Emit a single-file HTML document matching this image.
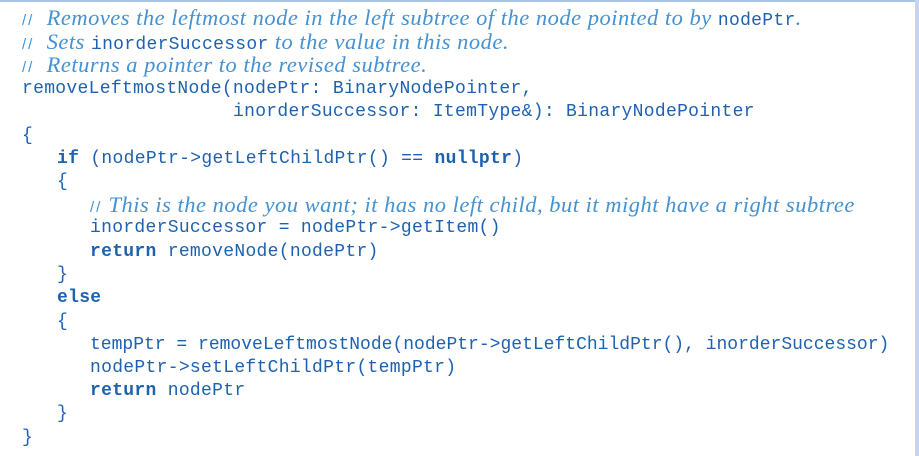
<!DOCTYPE html>
<html><head><style>
html,body{margin:0;padding:0;background:#fff;}
body{width:919px;height:456px;position:relative;overflow:hidden;}
.tb{position:absolute;left:0;top:0;width:919px;height:2px;background:#aac4e4;}
.rb{position:absolute;left:915px;top:0;width:4px;height:456px;background:#c5d6ee;}
.l{position:absolute;white-space:pre;font-family:"Liberation Mono",monospace;font-size:18px;letter-spacing:0.3px;color:#1d62b0;line-height:23px;}
.c{font-family:"Liberation Serif",serif;font-style:italic;font-size:22.5px;letter-spacing:0.5px;color:#4592d2;}
.s{font-family:"Liberation Sans",sans-serif;font-style:normal;font-size:15px;color:#4592d2;letter-spacing:2px;}
.cm{font-family:"Liberation Mono",monospace;font-style:normal;font-size:18px;letter-spacing:0.3px;color:#1d62b0;}
b{font-weight:bold;}
</style></head><body>
<div class="tb"></div><div class="rb"></div>
<div class="l" style="top:6px;left:22px"><span class="c"><span class="s">//</span>  Removes the leftmost node in the left subtree of the node pointed to by <span class="cm">nodePtr</span>.</span></div>
<div class="l" style="top:30px;left:22px"><span class="c"><span class="s">//</span>  Sets <span class="cm">inorderSuccessor</span> to the value in this node.</span></div>
<div class="l" style="top:53px;left:22px"><span class="c"><span class="s">//</span>  Returns a pointer to the revised subtree.</span></div>
<div class="l" style="top:78px;left:22px">removeLeftmostNode(nodePtr: BinaryNodePointer,</div>
<div class="l" style="top:101px;left:233px">inorderSuccessor: ItemType&amp;): BinaryNodePointer</div>
<div class="l" style="top:125px;left:22px">{</div>
<div class="l" style="top:148px;left:57px"><b>if</b> (nodePtr-&gt;getLeftChildPtr() == <b>nullptr</b>)</div>
<div class="l" style="top:171px;left:57px">{</div>
<div class="l" style="top:193px;left:90px"><span class="c"><span class="s">//</span> This is the node you want; it has no left child, but it might have a right subtree</span></div>
<div class="l" style="top:217px;left:90px">inorderSuccessor = nodePtr-&gt;getItem()</div>
<div class="l" style="top:241px;left:90px"><b>return</b> removeNode(nodePtr)</div>
<div class="l" style="top:264px;left:57px">}</div>
<div class="l" style="top:287px;left:57px"><b>else</b></div>
<div class="l" style="top:311px;left:57px">{</div>
<div class="l" style="top:334px;left:90px;letter-spacing:0">tempPtr = removeLeftmostNode(nodePtr-&gt;getLeftChildPtr(), inorderSuccessor)</div>
<div class="l" style="top:357px;left:90px">nodePtr-&gt;setLeftChildPtr(tempPtr)</div>
<div class="l" style="top:380px;left:90px"><b>return</b> nodePtr</div>
<div class="l" style="top:403px;left:57px">}</div>
<div class="l" style="top:427px;left:22px">}</div>
</body></html>
